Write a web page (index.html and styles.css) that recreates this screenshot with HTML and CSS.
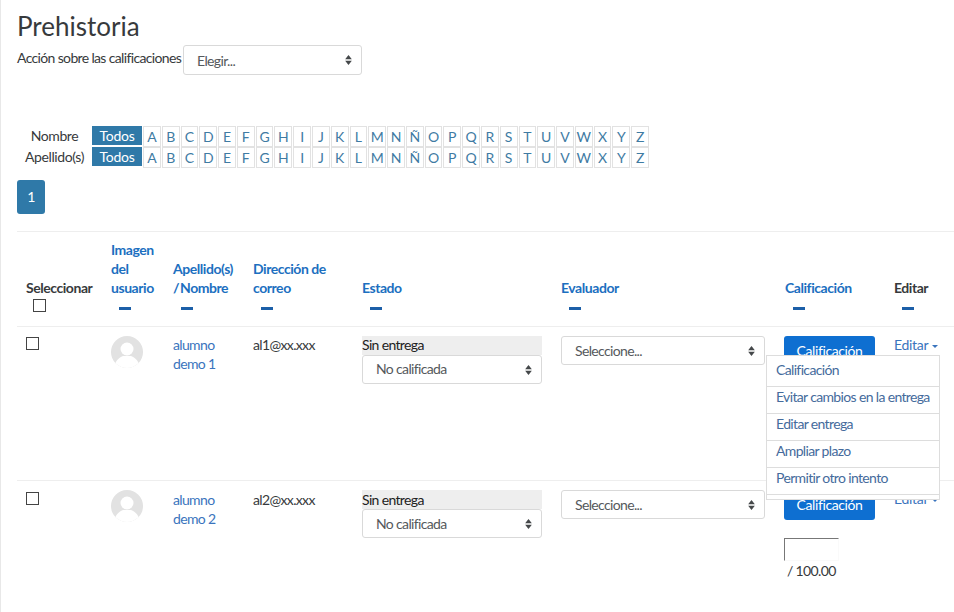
FILE: index.html
```html
<!DOCTYPE html>
<html lang="es">
<head>
<meta charset="utf-8">
<title>Prehistoria</title>
<link rel="stylesheet" href="styles.css">
</head>
<body>
<main class="page">
  <h1 class="title">Prehistoria</h1>
  <div class="action">
    <span class="action-label">Acción sobre las calificaciones</span>
    <div class="select select-action">Elegir...<svg class="updown" viewBox="0 0 8 12"><path d="M4 0 8 5H0zM4 12 0 7h8z"/></svg></div>
  </div>

  <div class="initials">
    <span class="initials-label">Nombre</span>
    <span class="todos">Todos</span>
    <div class="letters">
      <a>A</a><a>B</a><a>C</a><a>D</a><a>E</a><a>F</a><a>G</a><a>H</a><a>I</a><a>J</a><a>K</a><a>L</a><a>M</a><a>N</a><a>Ñ</a><a>O</a><a>P</a><a>Q</a><a>R</a><a>S</a><a>T</a><a>U</a><a>V</a><a>W</a><a>X</a><a>Y</a><a>Z</a>
    </div>
  </div>
  <div class="initials initials-second">
    <span class="initials-label">Apellido(s)</span>
    <span class="todos">Todos</span>
    <div class="letters">
      <a>A</a><a>B</a><a>C</a><a>D</a><a>E</a><a>F</a><a>G</a><a>H</a><a>I</a><a>J</a><a>K</a><a>L</a><a>M</a><a>N</a><a>Ñ</a><a>O</a><a>P</a><a>Q</a><a>R</a><a>S</a><a>T</a><a>U</a><a>V</a><a>W</a><a>X</a><a>Y</a><a>Z</a>
    </div>
  </div>

  <div class="pager">1</div>

  <table class="grading">
    <colgroup>
      <col class="c1"><col class="c2"><col class="c3"><col class="c4"><col class="c5"><col class="c6"><col class="c7"><col class="c8">
    </colgroup>
    <thead>
      <tr>
        <th class="plain">Seleccionar<span class="box box-head"></span></th>
        <th>Imagen del usuario<span class="dash"></span></th>
        <th class="name-head">Apellido(s) / Nombre<span class="dash"></span></th>
        <th>Dirección de correo<span class="dash"></span></th>
        <th>Estado<span class="dash"></span></th>
        <th>Evaluador<span class="dash"></span></th>
        <th>Calificación<span class="dash"></span></th>
        <th class="plain">Editar<span class="dash"></span></th>
      </tr>
    </thead>
    <tbody>
      <tr>
        <td class="check"><span class="box"></span></td>
        <td><svg class="avatar" viewBox="0 0 32 32"><defs><clipPath id="a1"><circle cx="16" cy="16" r="16"/></clipPath></defs><circle cx="16" cy="16" r="16" fill="#e2e2e2"/><g clip-path="url(#a1)" fill="#fff"><circle cx="16" cy="13" r="6.5"/><path d="M3 32c1-8 6-11 9-12h8c3 1 8 4 9 12z"/></g></svg></td>
        <td class="name"><a>alumno demo 1</a></td>
        <td class="mail">al1@xx.xxx</td>
        <td>
          <div class="status">Sin entrega</div>
          <div class="select select-state">No calificada<svg class="updown" viewBox="0 0 8 12"><path d="M4 0 8 5H0zM4 12 0 7h8z"/></svg></div>
        </td>
        <td><div class="select select-grader">Seleccione...<svg class="updown" viewBox="0 0 8 12"><path d="M4 0 8 5H0zM4 12 0 7h8z"/></svg></div></td>
        <td><div class="grade-btn">Calificación</div></td>
        <td class="edit-cell"><a class="edit">Editar<i class="caret"></i></a></td>
      </tr>
      <tr class="row-second">
        <td class="check"><span class="box"></span></td>
        <td><svg class="avatar" viewBox="0 0 32 32"><defs><clipPath id="a2"><circle cx="16" cy="16" r="16"/></clipPath></defs><circle cx="16" cy="16" r="16" fill="#e2e2e2"/><g clip-path="url(#a2)" fill="#fff"><circle cx="16" cy="13" r="6.5"/><path d="M3 32c1-8 6-11 9-12h8c3 1 8 4 9 12z"/></g></svg></td>
        <td class="name"><a>alumno demo 2</a></td>
        <td class="mail">al2@xx.xxx</td>
        <td>
          <div class="status">Sin entrega</div>
          <div class="select select-state">No calificada<svg class="updown" viewBox="0 0 8 12"><path d="M4 0 8 5H0zM4 12 0 7h8z"/></svg></div>
        </td>
        <td><div class="select select-grader">Seleccione...<svg class="updown" viewBox="0 0 8 12"><path d="M4 0 8 5H0zM4 12 0 7h8z"/></svg></div></td>
        <td>
          <div class="grade-btn">Calificación</div>
          <div class="grade-input"></div>
          <div class="grade-max">/ 100.00</div>
        </td>
        <td class="edit-cell"><a class="edit">Editar<i class="caret"></i></a></td>
      </tr>
    </tbody>
  </table>

  <ul class="menu">
    <li>Calificación</li>
    <li>Evitar cambios en la entrega</li>
    <li>Editar entrega</li>
    <li>Ampliar plazo</li>
    <li>Permitir otro intento</li>
  </ul>
</main>
</body>
</html>
```

FILE: styles.css
```css
* { box-sizing: border-box; }
html, body { margin: 0; height: 100%; overflow: hidden; background: #fff; }
body {
  font-family: Lato, "Open Sans", sans-serif;
  font-size: 14px;
  line-height: 19px;
  color: #373a3c;
  letter-spacing: -0.65px;
}
.page {
  position: relative;
  width: 954px;
  height: 612px;
  padding: 11px 0 0 16px;
  border-left: 1px solid #e8e8e8;
}
.title {
  margin: 0;
  font-size: 26px;
  font-weight: 400;
  line-height: 30px;
  letter-spacing: 0;
}
.action { display: flex; align-items: flex-start; margin-top: 4px; height: 81px; }
.action-label { margin-top: 3px; margin-right: 2px; }
.select {
  position: relative;
  display: flex;
  align-items: center;
  background: #fff;
  border: 1px solid #d9d9d9;
  border-radius: 3px;
  color: #55595c;
  padding-left: 13px;
}
.updown { position: absolute; right: 9px; top: 50%; width: 7px; height: 10px; margin-top: -5px; fill: #45484a; }
.select-action { width: 179px; height: 30px; }
.initials { display: flex; align-items: stretch; height: 19px; }
.initials-second { margin-top: 2px; }
.initials-label { width: 75px; text-align: center; letter-spacing: -0.4px; }
.todos {
  width: 50px;
  background: #2f79a8;
  color: #fff;
  text-align: center;
  line-height: 20px;
  letter-spacing: -0.3px;
}
.letters {
  display: grid;
  grid-template-columns: repeat(27, 1fr);
  width: 508px;
  padding-left: 1px;
}
.letters a {
  border: 1px solid #e2e2e2;
  margin-right: 1px;
  color: #3f7ba3;
  text-align: center;
  line-height: 19px;
  letter-spacing: 0;
  min-width: 0;
}
.pager {
  width: 28px;
  height: 34px;
  margin-top: 14px;
  border-radius: 3px;
  background: #2f79a8;
  color: #fff;
  text-align: center;
  line-height: 34px;
}
.grading {
  width: 937px;
  margin-top: 17px;
  border-collapse: collapse;
  table-layout: fixed;
}
.c1 { width: 85px; }
.c2 { width: 62px; }
.c3 { width: 80px; }
.c4 { width: 109px; }
.c5 { width: 199px; }
.c6 { width: 224px; }
.c7 { width: 109px; }
.c8 { width: 69px; }
.grading th, .grading td {
  padding: 9px;
  text-align: left;
  vertical-align: top;
  border-top: 1px solid #eee;
}
.grading th {
  vertical-align: bottom;
  padding-top: 4px;
  padding-bottom: 14px;
  color: #1c6fc0;
  font-weight: 700;
  letter-spacing: -0.45px;
}
.grading th.plain { color: #373a3c; }
.grading th.name-head { word-spacing: -2px; }
.grading thead tr { height: 95px; }
.grading tbody tr { height: 154px; }
.dash {
  display: block;
  width: 12px;
  height: 3px;
  margin: 10px 0 2px 8px;
  background: #1c5fa8;
}
.box {
  display: block;
  width: 13px;
  height: 13px;
  border: 1px solid #444;
  background: #fff;
}
.box-head { margin: 2px 0 0 7px; }
.grading td.check { padding-top: 10px; }
.avatar { display: block; width: 32px; height: 32px; }
.grading td.name, .grading td.mail { padding-top: 8px; }
.grading .row-second td.check { padding-top: 11px; }
.grading .row-second td.name, .grading .row-second td.mail { padding-top: 9px; }
.name a { color: #3a74bd; display: block; width: 50px; }
.grading td { color: #373a3c; }
.status { width: 180px; height: 19px; background: #eee; color: #222; line-height: 17px; }
.row-second .status { line-height: 19px; }
.select-state { width: 180px; height: 29px; padding-bottom: 2px; }
.row-second .select-state { padding-bottom: 0; }
.select-grader { width: 204px; height: 29px; }
.grade-btn {
  width: 91px;
  height: 30px;
  margin-left: -1px;
  border-radius: 3px;
  background: #0e6fd1;
  color: #fff;
  text-align: center;
  line-height: 30px;
  letter-spacing: -0.4px;
}
.grade-input {
  width: 55px;
  height: 23px;
  margin: 18px 0 0 -1px;
  border: 1px solid #fafafa;
  border-top-color: #777;
  border-left-color: #777;
}
.grade-max { margin-left: 2px; }
.grading td.edit-cell { padding-top: 8px; }
.edit { color: #3a74bd; letter-spacing: -0.3px; }
.caret {
  display: inline-block;
  margin-left: 4px;
  vertical-align: 2px;
  border-top: 3px solid #3a74bd;
  border-left: 3px solid transparent;
  border-right: 3px solid transparent;
}
.menu {
  position: absolute;
  left: 765px;
  top: 355px;
  width: 174px;
  height: 145px;
  margin: 0;
  padding: 0;
  list-style: none;
  background: #fff;
  border: 1px solid #ddd;
  color: #456b9c;
}
.menu li {
  height: 27px;
  line-height: 19px;
  border-bottom: 1px solid #ddd;
  padding-left: 9px;
  white-space: nowrap;
}
.menu li:first-child { height: 31px; padding-top: 4px; }
```
